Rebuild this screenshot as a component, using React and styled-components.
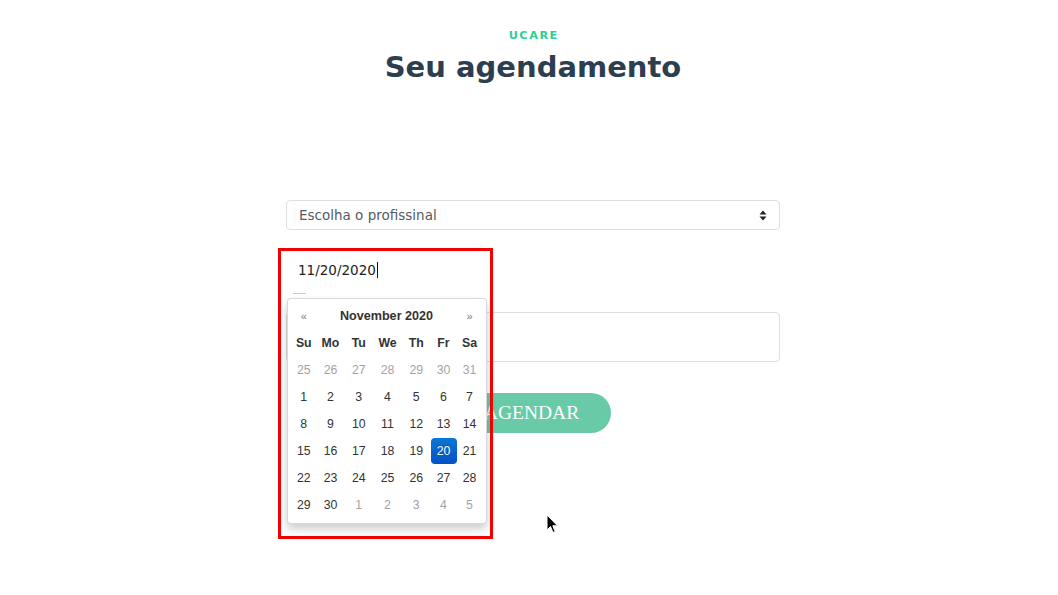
import React from "react";
import styled, { createGlobalStyle } from "styled-components";

const Global = createGlobalStyle`
  html, body { margin: 0; padding: 0; background: #fff; }
  body { font-family: "Liberation Serif", serif; }
`;

const Page = styled.div`
  position: relative;
  width: 1058px;
  height: 595px;
  padding-left: 8px;
  box-sizing: border-box;
  display: flex;
  flex-direction: column;
  align-items: center;
  overflow: hidden;
`;

const Eyebrow = styled.div`
  margin-top: 29px;
  font-family: "DejaVu Sans", sans-serif;
  font-weight: bold;
  font-size: 11.3px;
  line-height: 14px;
  letter-spacing: 1.5px;
  padding-left: 1.5px;
  color: #2dcf98;
`;

const Title = styled.h1`
  margin: 7px 0 0;
  font-family: "DejaVu Sans", sans-serif;
  font-weight: bold;
  font-size: 29px;
  line-height: 34px;
  color: #2c3e50;
`;

const Form = styled.div`
  margin-top: 116px;
  width: 494px;
  display: flex;
  flex-direction: column;
  align-items: stretch;
`;

const Select = styled.div`
  height: 30px;
  box-sizing: border-box;
  border: 1px solid #dcdfe3;
  border-radius: 4px;
  padding: 0 12px;
  display: flex;
  align-items: center;
  justify-content: space-between;
  font-family: "DejaVu Sans", sans-serif;
  font-size: 13.5px;
  color: #555b61;
`;

const DateField = styled.div`
  position: relative;
  margin-top: 25px;
  height: 30px;
  padding: 0 12px;
  display: flex;
  align-items: center;
  font-family: "DejaVu Sans", sans-serif;
  font-size: 13.5px;
  color: #222;
`;

const Caret = styled.span`
  display: inline-block;
  width: 1px;
  height: 16px;
  background: #111;
  margin-left: 1px;
`;

const Highlight = styled.div`
  position: absolute;
  left: -8px;
  top: -7px;
  width: 215px;
  height: 291px;
  box-sizing: border-box;
  border: 3px solid #f20000;
  z-index: 5;
  pointer-events: none;
`;

const Pointer = styled.div`
  position: absolute;
  left: 7px;
  top: 38px;
  width: 13px;
  height: 1px;
  background: #c8c8c8;
  z-index: 4;
`;

const Dropdown = styled.div`
  position: absolute;
  left: 1px;
  top: 43px;
  width: 200px;
  height: 226px;
  box-sizing: border-box;
  padding: 3px 0 5px 3px;
  background: #fff;
  border: 1px solid rgba(0, 0, 0, 0.15);
  border-radius: 4px;
  box-shadow: 0 5px 10px rgba(0, 0, 0, 0.2);
  z-index: 4;
  display: grid;
  grid-template-columns: 25.5px 28px 28.5px 29px 28.5px 26px 26px;
  grid-auto-rows: 27px;
  font-family: "Liberation Sans", Arial, sans-serif;
  font-size: 12.3px;
  color: #333;
`;

const Nav = styled.div`
  display: flex;
  align-items: center;
  justify-content: center;
  font-size: 11px;
  color: #777;
`;

const Month = styled.div`
  grid-column: span 5;
  display: flex;
  align-items: center;
  justify-content: center;
  font-weight: bold;
  font-size: 12.6px;
  color: #333;
`;

const DayName = styled.div`
  display: flex;
  align-items: center;
  justify-content: center;
  font-weight: bold;
`;

const Day = styled.div`
  display: flex;
  align-items: center;
  justify-content: center;
`;

const DayInner = styled.span`
  flex: none;
  width: 26px;
  height: 26px;
  display: flex;
  align-items: center;
  justify-content: center;
  border-radius: 4px;
  color: ${(p) => (p.$active ? "#fff" : p.$muted ? "#a3a3a3" : "#333")};
  background: ${(p) =>
    p.$active ? "linear-gradient(to bottom, #0a77d4, #0451c4)" : "transparent"};
  text-shadow: ${(p) => (p.$active ? "0 -1px 0 rgba(0,0,0,0.25)" : "none")};
`;

const TextArea = styled.div`
  margin-top: 27px;
  height: 50px;
  box-sizing: border-box;
  border: 1px solid #dcdfe3;
  border-radius: 4px;
`;

const ButtonRow = styled.div`
  margin-top: 31px;
  display: flex;
  justify-content: center;
`;

const Button = styled.button`
  width: 158px;
  height: 40px;
  border: none;
  border-radius: 20px;
  background: #69caa8;
  color: #fff;
  font-family: "Liberation Serif", serif;
  font-size: 19.5px;
  padding: 0;
  margin-right: 3px;
`;

const Cursor = styled.svg`
  position: absolute;
  left: 546px;
  top: 514px;
  z-index: 10;
`;

const days = [
  ...[25, 26, 27, 28, 29, 30, 31].map((d) => ({ d, m: true })),
  ...Array.from({ length: 30 }, (_, i) => ({ d: i + 1, m: false })),
  ...[1, 2, 3, 4, 5].map((d) => ({ d, m: true })),
];

export default function App() {
  return (
    <>
      <Global />
      <Page>
        <Eyebrow>UCARE</Eyebrow>
        <Title>Seu agendamento</Title>
        <Form>
          <Select>
            <span>Escolha o profissinal</span>
            <svg width="8" height="11" viewBox="0 0 8 11">
              <path d="M4 0.5 L7.5 4.5 H0.5 Z" fill="#222" />
              <path d="M4 10.5 L7.5 6.5 H0.5 Z" fill="#222" />
            </svg>
          </Select>
          <DateField>
            <span>11/20/2020</span>
            <Caret />
            <Highlight />
            <Pointer />
            <Dropdown>
              <Nav>«</Nav>
              <Month>November 2020</Month>
              <Nav>»</Nav>
              {["Su", "Mo", "Tu", "We", "Th", "Fr", "Sa"].map((n) => (
                <DayName key={n}>{n}</DayName>
              ))}
              {days.map((x, i) => (
                <Day key={i}>
                  <DayInner $muted={x.m} $active={!x.m && x.d === 20}>
                    {x.d}
                  </DayInner>
                </Day>
              ))}
            </Dropdown>
          </DateField>
          <TextArea />
          <ButtonRow>
            <Button>AGENDAR</Button>
          </ButtonRow>
        </Form>
        <Cursor width="13" height="20" viewBox="0 0 13 20">
          <path
            d="M1 1 L1 16 L4.5 12.5 L7 18.5 L9.2 17.6 L6.8 11.8 L11.5 11.8 Z"
            fill="#000"
            stroke="#fff"
            strokeWidth="1"
          />
        </Cursor>
      </Page>
    </>
  );
}
